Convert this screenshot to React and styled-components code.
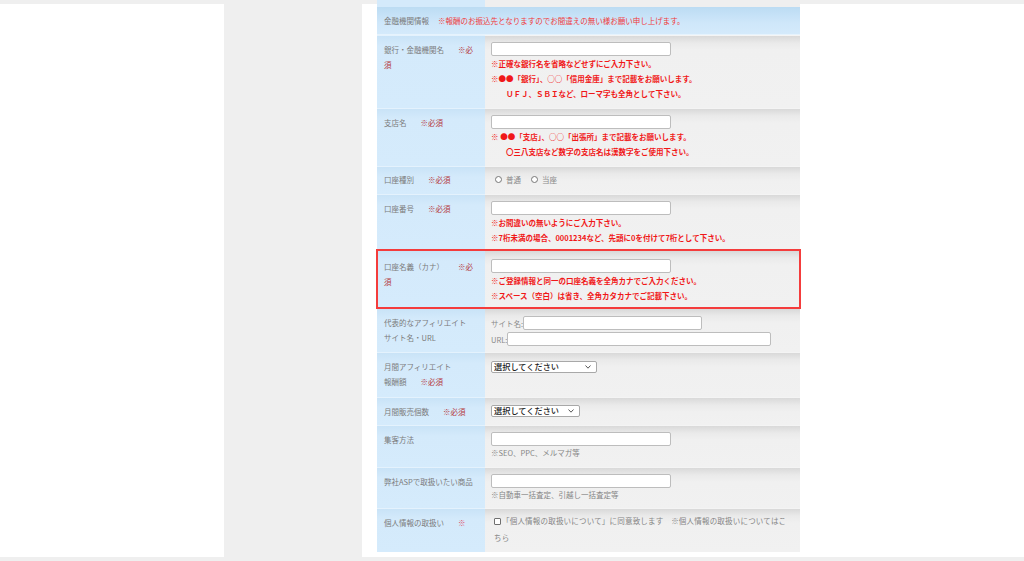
import React from "react";
import styled, { createGlobalStyle } from "styled-components";

const Global = createGlobalStyle`
  html, body { margin: 0; padding: 0; background: #efefef; }
  body { font-family: "Noto Sans CJK JP", "Noto Sans", sans-serif; }
  * { box-sizing: border-box; }
`;

const Page = styled.div`
  display: flex;
  height: 561px;
  padding: 4px 0;
  background: #efefef;
  overflow: hidden;
`;

const SideColumn = styled.div`
  width: 224px;
  background: #ffffff;
`;

const MainPanel = styled.div`
  flex: 1;
  margin-left: 138px;
  background: #ffffff;
  padding-left: 15px;
`;

const FormTable = styled.div`
  width: 423px;
  margin-top: -4px;
  display: flex;
  flex-direction: column;
`;

const Row = styled.div`
  display: grid;
  grid-template-columns: 108px 315px;
  height: ${(p) => p.h}px;
  ${(p) =>
    p.highlight &&
    `outline: 2px solid #f43c3c; outline-offset: -1px; position: relative; z-index: 1;`}
`;

const HeaderRow = styled.div`
  display: flex;
  align-items: center;
  height: ${(p) => p.h}px;
  padding: 0 0 1px 7px;
  background: linear-gradient(to bottom, #bcdcf3 0%, #cfe7fa 60%, #d4eafb 100%);
  border-bottom: 1px solid #e6f3fd;
  font-size: 7.5px;
  color: #7a7a7a;
`;

const HeaderNote = styled.span`
  margin-left: 9px;
  color: #f03a3a;
`;

const Label = styled.div`
  padding: ${(p) => (p.pt != null ? p.pt : 6)}px 8px 0 7px;
  font-size: 7.5px;
  line-height: 15px;
  color: #7b7b7b;
  background: linear-gradient(to bottom, #c9e3f7 0px, #d4eafb 10px, #d5ebfc 100%);
  border-top: 1px solid #e4f2fd;
`;

const Req = styled.span`
  margin-left: ${(p) => (p.gap != null ? p.gap : 14)}px;
  color: ${(p) => (p.pink ? "#e0506a" : "#b4383c")};
`;

const ReqCont = styled.span`
  color: #b4383c;
`;

const Value = styled.div`
  padding: ${(p) => (p.pt != null ? p.pt : 6)}px 8px 0 6px;
  font-size: 7.5px;
  line-height: 15px;
  color: #808080;
  background: linear-gradient(to bottom, #d9d9d9 0px, #eaeaea 7px, #f0f0f0 14px, #f1f1f1 100%);
  border-top: 1px solid #f4f4f4;
`;

const TextInput = styled.input`
  display: block;
  width: ${(p) => p.w || 180}px;
  height: 14px;
  margin: 0;
  padding: 0 3px;
  border: 1px solid #bdbdbd;
  border-radius: 2px;
  background: #ffffff;
  font-size: 8px;
  outline: none;
`;

const RedNote = styled.div`
  font-size: 7.5px;
  line-height: 15px;
  font-weight: 700;
  color: #f01818;
  white-space: pre;
`;

const GrayNote = styled.div`
  font-size: 7.5px;
  line-height: 13px;
  color: #858585;
`;

const FieldLine = styled.div`
  display: flex;
  align-items: center;
  height: 16px;
  color: #8a8a8a;
`;

const InlineInput = styled(TextInput)`
  display: inline-block;
`;

const SelectWrap = styled.div`
  position: relative;
  display: inline-flex;
  align-items: center;
  width: ${(p) => p.w}px;
  height: 12px;
  border: 1px solid #a8a8a8;
  border-radius: 2px;
  background: #ffffff;
  padding-left: 2px;
  font-size: 8.2px;
  font-weight: 500;
  color: #222222;
  margin-top: 1px;
`;

const Chevron = styled.svg`
  position: absolute;
  right: 5px;
  top: 3px;
  width: 6px;
  height: 4px;
`;

const ChoiceGroup = styled.div`
  display: flex;
  align-items: center;
  height: 15px;
  gap: 4px;
  padding-left: 4px;
`;

const Radio = styled.span`
  display: inline-block;
  width: 7px;
  height: 7px;
  border: 1px solid #777777;
  border-radius: 50%;
  background: #ffffff;
`;

const ChoiceText = styled.span`
  margin-right: 6px;
  color: #8a8a8a;
`;

const CheckLine = styled.div`
  line-height: 17px;
  color: #858585;
  padding-left: 3px;
  letter-spacing: 0.2px;
`;

const CheckBox = styled.span`
  display: inline-block;
  width: 7px;
  height: 7px;
  border: 1px solid #6f6f6f;
  border-radius: 1px;
  background: #ffffff;
  margin-right: 1px;
  vertical-align: -0.5px;
`;

const Sliver = styled.div`
  display: grid;
  grid-template-columns: 108px 315px;
  height: 7px;
`;

const SliverLabel = styled.div`
  background: #d4eafb;
`;

const SliverValue = styled.div`
  background: #efefef;
`;

function Select({ w }) {
  return (
    <SelectWrap w={w}>
      選択してください
      <Chevron viewBox="0 0 6 4">
        <polyline points="0.5,0.5 3,3.2 5.5,0.5" fill="none" stroke="#444" strokeWidth="0.9" />
      </Chevron>
    </SelectWrap>
  );
}

export default function App() {
  return (
    <>
      <Global />
      <Page>
        <SideColumn />
        <MainPanel>
          <FormTable>
            <Sliver>
              <SliverLabel />
              <SliverValue />
            </Sliver>
            <HeaderRow h={28}>
              金融機関情報
              <HeaderNote>※報酬のお振込先となりますのでお間違えの無い様お願い申し上げます。</HeaderNote>
            </HeaderRow>

            <Row h={73}>
              <Label>
                銀行・金融機関名<Req>※必</Req>
                <br />
                <ReqCont>須</ReqCont>
              </Label>
              <Value>
                <TextInput />
                <RedNote>※正確な銀行名を省略などせずにご入力下さい。</RedNote>
                <RedNote>※●●「銀行」、○○「信用金庫」まで記載をお願いします。</RedNote>
                <RedNote>{"　　ＵＦＪ、ＳＢＩなど、ローマ字も全角として下さい。"}</RedNote>
              </Value>
            </Row>

            <Row h={58}>
              <Label>
                支店名<Req>※必須</Req>
              </Label>
              <Value>
                <TextInput />
                <RedNote>※ ●●「支店」、○○「出張所」まで記載をお願いします。</RedNote>
                <RedNote>{"　　〇三八支店など数字の支店名は漢数字をご使用下さい。"}</RedNote>
              </Value>
            </Row>

            <Row h={28}>
              <Label pt={5}>
                口座種別<Req>※必須</Req>
              </Label>
              <Value pt={5}>
                <ChoiceGroup>
                  <Radio />
                  <ChoiceText>普通</ChoiceText>
                  <Radio />
                  <ChoiceText>当座</ChoiceText>
                </ChoiceGroup>
              </Value>
            </Row>

            <Row h={56}>
              <Label>
                口座番号<Req>※必須</Req>
              </Label>
              <Value>
                <TextInput />
                <RedNote>※お間違いの無いようにご入力下さい。</RedNote>
                <RedNote>※7桁未満の場合、0001234など、先頭に0を付けて7桁として下さい。</RedNote>
              </Value>
            </Row>

            <Row h={58} highlight>
              <Label pt={8}>
                口座名義（カナ）<Req>※必</Req>
                <br />
                <ReqCont>須</ReqCont>
              </Label>
              <Value pt={8}>
                <TextInput />
                <RedNote>※ご登録情報と同一の口座名義を全角カナでご入力ください。</RedNote>
                <RedNote>※スペース（空白）は省き、全角カタカナでご記載下さい。</RedNote>
              </Value>
            </Row>

            <Row h={44}>
              <Label>
                代表的なアフィリエイト
                <br />
                サイト名・URL
              </Label>
              <Value>
                <FieldLine>
                  サイト名:
                  <InlineInput w={179} />
                </FieldLine>
                <FieldLine>
                  URL:
                  <InlineInput w={264} />
                </FieldLine>
              </Value>
            </Row>

            <Row h={45}>
              <Label>
                月間アフィリエイト
                <br />
                報酬額<Req>※必須</Req>
              </Label>
              <Value>
                <Select w={106} />
              </Value>
            </Row>

            <Row h={28}>
              <Label>
                月間販売個数<Req>※必須</Req>
              </Label>
              <Value pt={5}>
                <Select w={89} />
              </Value>
            </Row>

            <Row h={42}>
              <Label>集客方法</Label>
              <Value>
                <TextInput />
                <GrayNote>※SEO、PPC、メルマガ等</GrayNote>
              </Value>
            </Row>

            <Row h={41}>
              <Label>弊社ASPで取扱いたい商品</Label>
              <Value>
                <TextInput />
                <GrayNote>※自動車一括査定、引越し一括査定等</GrayNote>
              </Value>
            </Row>

            <Row h={44}>
              <Label>
                個人情報の取扱い<Req pink>※</Req>
              </Label>
              <Value pt={3}>
                <CheckLine>
                  <CheckBox />
                  「個人情報の取扱いについて」に同意致します　※個人情報の取扱いについてはこ
                  <br />
                  ちら
                </CheckLine>
              </Value>
            </Row>
          </FormTable>
        </MainPanel>
      </Page>
    </>
  );
}
